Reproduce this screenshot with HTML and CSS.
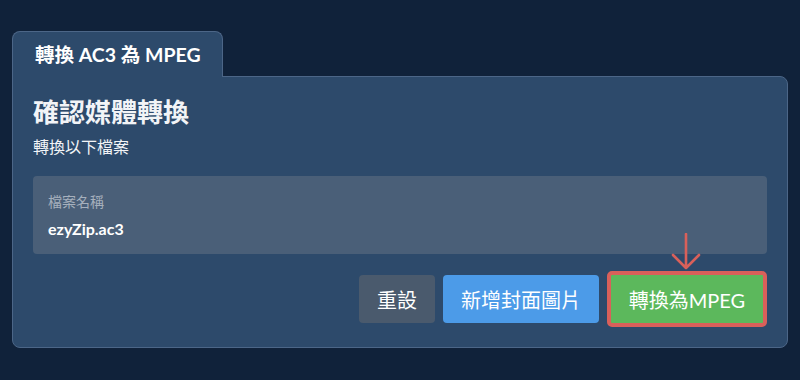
FILE: index.html
```html
<!DOCTYPE html>
<html lang="zh-Hant">
<head>
<meta charset="utf-8">
<title>轉換 AC3 為 MPEG</title>
<link rel="stylesheet" href="styles.css">
</head>
<body>
<div class="wrap">
  <div class="tab">轉換 AC3 為 MPEG</div>
  <div class="panel">
    <h1 class="title">確認媒體轉換</h1>
    <p class="subtitle">轉換以下檔案</p>
    <div class="field">
      <div class="label">檔案名稱</div>
      <div class="value">ezyZip.ac3</div>
    </div>
    <div class="actions">
      <button class="btn btn-gray">重設</button>
      <button class="btn btn-blue">新增封面圖片</button>
      <div class="convert-wrap">
        <svg class="arrow" width="32" height="38" viewBox="0 0 32 38">
          <path d="M16 1 V35 M3 22 L16 35 L29 22" fill="none" stroke="#d9605a" stroke-width="2.6" stroke-linecap="round" stroke-linejoin="round"/>
        </svg>
        <button class="btn btn-green">轉換為MPEG</button>
      </div>
    </div>
  </div>
</div>
</body>
</html>
```
FILE: styles.css
```css
html, body {
  margin: 0;
  padding: 0;
}
body {
  background: #10223a;
  font-family: Lato, "Noto Sans CJK TC", sans-serif;
  color: #fff;
  width: 800px;
  height: 380px;
  overflow: hidden;
}
.wrap {
  padding: 31px 12px 0 12px;
  display: flex;
  flex-direction: column;
  align-items: flex-start;
}
.tab {
  width: 211px;
  height: 46px;
  box-sizing: border-box;
  background: #2d4a6b;
  border: 1px solid #4c6687;
  border-bottom: none;
  border-radius: 8px 8px 0 0;
  font-size: 19.5px;
  font-weight: 700;
  line-height: 46px;
  padding-left: 22px;
  position: relative;
  z-index: 1;
  margin-bottom: -1px;
  white-space: nowrap;
}
.panel {
  box-sizing: border-box;
  width: 776px;
  height: 272px;
  background: #2d4a6b;
  border: 1px solid #4c6687;
  border-radius: 0 8px 8px 8px;
  padding: 20px 20px 0 20px;
}
.title {
  margin: 0;
  font-size: 26px;
  font-weight: 700;
  line-height: 30px;
  color: #f2f4f7;
}
.subtitle {
  margin: 10px 0 0 0;
  font-size: 16px;
  line-height: 20px;
  color: #f2f4f7;
}
.field {
  margin-top: 19px;
  height: 78px;
  box-sizing: border-box;
  background: #4a5f78;
  border-radius: 4px;
  padding: 17px 15px 0 15px;
}
.label {
  font-size: 14px;
  line-height: 18px;
  color: #a6b0bd;
}
.value {
  margin-top: 8px;
  font-size: 16px;
  font-weight: 700;
  line-height: 20px;
  color: #fff;
}
.actions {
  margin-top: 17px;
  display: flex;
  justify-content: flex-end;
  align-items: center;
  gap: 8px;
}
.btn {
  font-family: Lato, "Noto Sans CJK TC", sans-serif;
  font-size: 20px;
  color: #fff;
  border: none;
  border-radius: 4px;
  height: 48px;
  padding: 0 18px;
  cursor: pointer;
}
.btn-gray {
  background: #4a5a6d;
}
.btn-blue {
  background: #4c9be8;
}
.convert-wrap {
  position: relative;
}
.btn-green {
  background: #5cb85c;
  height: 56px;
  border: 4px solid #d9605a;
  border-radius: 5px;
  padding: 0 17px;
  width: 160px;
  display: block;
}
.arrow {
  position: absolute;
  left: 63px;
  top: -38px;
}
```
